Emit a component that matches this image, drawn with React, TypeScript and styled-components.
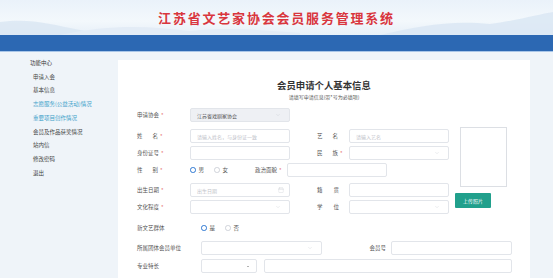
import React from "react";
import styled, { createGlobalStyle } from "styled-components";
import { ChevronDown, Calendar } from "lucide-react";

const GlobalStyle = createGlobalStyle`
  html, body {
    margin: 0;
    padding: 0;
    background: #eff4f9;
    font-family: "Noto Sans CJK SC", "Noto Sans", sans-serif;
  }
  #root {
    width: 553px;
    height: 278px;
    overflow: hidden;
  }
`;

const menu = [
  { text: "申请入会" },
  { text: "基本信息" },
  { text: "志愿服务(公益活动)情况", active: true },
  { text: "重要项目创作情况", active: true },
  { text: "会员及作品获奖情况" },
  { text: "站内信" },
  { text: "修改密码" },
  { text: "退出" },
];

function Mountains() {
  return (
    <svg width="553" height="35" viewBox="0 0 553 35" preserveAspectRatio="none">
      <path
        d="M0 22 C30 18 50 24 80 30 L110 35 L0 35 Z"
        fill="#d9e6f2"
        opacity="0.8"
      />
      <path
        d="M60 35 C110 24 150 26 190 31 C230 27 260 30 300 33 L300 35 Z"
        fill="#e3ecf6"
      />
      <path
        d="M380 35 C420 26 450 20 490 24 C520 20 540 14 553 12 L553 35 Z"
        fill="#dce8f4"
        opacity="0.9"
      />
    </svg>
  );
}

function Select({ value, width }: { value?: string; width: number }) {
  return (
    <SelectBox $w={width} $filled={!!value}>
      <span>{value}</span>
      <ChevronDown size={6} strokeWidth={1} color="#b8bcc4" />
    </SelectBox>
  );
}

function Radio({ label, checked }: { label: string; checked?: boolean }) {
  return (
    <RadioItem>
      <Dot $on={checked} />
      <span>{label}</span>
    </RadioItem>
  );
}

function Label({ text, req, w, spread }: { text: string; req?: boolean; w: number; spread?: number }) {
  return (
    <LabelBox $w={w}>
      {spread ? (
        <Spread $w={spread}>
          {text.split("").map((c, i) => (
            <span key={i}>{c}</span>
          ))}
        </Spread>
      ) : (
        text
      )}
      {req && <Star>*</Star>}
    </LabelBox>
  );
}

export default function App() {
  return (
    <>
      <GlobalStyle />
      <Header>
        <Mountains />
        <Title>江苏省文艺家协会会员服务管理系统</Title>
      </Header>
      <NavBar />
      <Main>
        <Sidebar>
          <SideHead>功能中心</SideHead>
          {menu.map((m) => (
            <SideItem key={m.text} $active={m.active}>
              {m.text}
            </SideItem>
          ))}
        </Sidebar>
        <Panel>
          <PanelTitle>会员申请个人基本信息</PanelTitle>
          <PanelSub>请填写申请信息(带*号为必填项)</PanelSub>

          <Row $mt={7}>
            <Label text="申请协会" req w={53} />
            <SelectBox $w={100} $grey>
              <span>江苏省戏剧家协会</span>
              <ChevronDown size={6} strokeWidth={1} color="#b8bcc4" />
            </SelectBox>
          </Row>

          <Upper>
            <Fields>
              <Row $mt={0}>
                <Label text="姓名" spread={21} req w={53} />
                <Input $w={100} placeholder="请输入姓名，与身份证一致" />
                <Gap />
                <Label text="艺名" spread={21} w={32} />
                <Input $w={100} placeholder="请输入艺名" />
              </Row>
              <Row>
                <Label text="身份证号" req w={53} />
                <Input $w={100} />
                <Gap />
                <Label text="民族" spread={21} req w={32} />
                <Select width={100} />
              </Row>
              <Row>
                <Label text="性别" spread={21} req w={53} />
                <Radios>
                  <Radio label="男" checked />
                  <Radio label="女" />
                </Radios>
                <Gap />
                <Label text="政治面貌" req w={32} />
                <Input $w={100} />
              </Row>
              <Row $mt={6}>
                <Label text="出生日期" req w={53} />
                <DateBox>
                  <span>出生日期</span>
                  <Calendar size={6} strokeWidth={1} color="#b8bcc4" />
                </DateBox>
                <Gap />
                <Label text="籍贯" spread={22} w={32} />
                <Input $w={100} />
              </Row>
              <Row>
                <Label text="文化程度" req w={53} />
                <Select width={100} />
                <Gap />
                <Label text="学位" spread={22} w={32} />
                <Select width={100} />
              </Row>
            </Fields>
            <PhotoCol>
              <Photo />
              <UploadButton>上传照片</UploadButton>
            </PhotoCol>
          </Upper>

          <Row $mt={7}>
            <Label text="新文艺群体" w={64} />
            <Radios>
              <Radio label="是" checked />
              <Radio label="否" />
            </Radios>
          </Row>
          <Row $mt={6}>
            <Label text="所属团体会员单位" w={64} />
            <Select width={121} />
            <RightLabel>会员号</RightLabel>
            <Input $w={121} />
          </Row>
          <Row $mt={4}>
            <Label text="专业特长" w={64} />
            <SmallSelect>
              <Caret />
            </SmallSelect>
            <Input $w={248} />
          </Row>
        </Panel>
      </Main>
    </>
  );
}

const Header = styled.div`
  position: relative;
  height: 35px;
  background: linear-gradient(180deg, #eaf2fa 0%, #f3f8fc 60%, #e7f0f8 100%);
  display: flex;
  justify-content: center;
  align-items: center;
  overflow: hidden;
  svg {
    position: absolute;
    left: 0;
    top: 0;
  }
`;

const Title = styled.h1`
  position: relative;
  margin: 0;
  font-size: 13px;
  font-weight: 700;
  letter-spacing: 1.8px;
  color: #d9363e;
  line-height: 1;
  margin-top: 0;
`;

const NavBar = styled.div`
  height: 16px;
  background: #2c68b3;
  border-bottom: 1px solid #a9c6e8;
`;

const Main = styled.div`
  display: flex;
  padding-top: 8px;
`;

const Sidebar = styled.div`
  width: 88px;
  padding-left: 30px;
  padding-top: 0;
  margin-top: -3px;
  font-size: 5.5px;
`;

const SideHead = styled.div`
  line-height: 13.7px;
  color: #333;
`;

const SideItem = styled.div<{ $active?: boolean }>`
  line-height: 13.7px;
  padding-left: 3px;
  color: ${(p) => (p.$active ? "#3b9fc9" : "#444")};
  white-space: nowrap;
`;

const Panel = styled.div`
  width: 393px;
  height: 240px;
  background: #fff;
  padding: 0 0 0 19px;
`;

const PanelTitle = styled.div`
  margin-top: 19px;
  text-align: center;
  font-size: 9.4px;
  line-height: 12px;
  font-weight: 700;
  color: #333;
  padding-right: 19px;
`;

const PanelSub = styled.div`
  margin-top: 2px;
  text-align: center;
  font-size: 5px;
  line-height: 8px;
  color: #555;
  padding-right: 19px;
`;

const Row = styled.div<{ $mt?: number }>`
  display: flex;
  align-items: center;
  height: 14px;
  margin-top: ${(p) => p.$mt ?? 3}px;
`;

const Upper = styled.div`
  display: flex;
  margin-top: 7px;
`;

const Fields = styled.div`
  display: flex;
  flex-direction: column;
`;

const Gap = styled.div`
  width: 27px;
`;

const LabelBox = styled.div<{ $w: number }>`
  width: ${(p) => p.$w}px;
  flex: none;
  display: flex;
  align-items: center;
  font-size: 5.5px;
  color: #555;
  white-space: nowrap;
`;

const Spread = styled.span<{ $w: number }>`
  display: inline-flex;
  justify-content: space-between;
  width: ${(p) => p.$w}px;
`;

const Star = styled.span`
  color: #e04848;
  margin-left: 2px;
`;

const Input = styled.input<{ $w: number }>`
  box-sizing: border-box;
  width: ${(p) => p.$w}px;
  height: 14px;
  border: 1px solid #e2e5ea;
  border-radius: 2px;
  padding: 0 6px;
  font-family: inherit;
  font-size: 5px;
  outline: none;
  background: #fff;
  &::placeholder {
    color: #bfc3ca;
  }
`;

const SelectBox = styled.div<{ $w: number; $grey?: boolean; $filled?: boolean }>`
  box-sizing: border-box;
  width: ${(p) => p.$w}px;
  height: 14px;
  border: 1px solid #e2e5ea;
  border-radius: 2px;
  padding: 0 8px 0 6px;
  display: flex;
  align-items: center;
  justify-content: space-between;
  font-size: 5px;
  color: #555;
  background: ${(p) => (p.$grey ? "#eef0f4" : "#fff")};
`;

const DateBox = styled(SelectBox).attrs({ $w: 100 })`
  padding-right: 5px;
  color: #bfc3ca;
`;

const SmallSelect = styled.div`
  box-sizing: border-box;
  width: 56px;
  height: 14px;
  border: 1px solid #e2e5ea;
  border-radius: 2px;
  display: flex;
  align-items: center;
  justify-content: flex-end;
  padding-right: 7px;
  margin-right: 7px;
`;

const Caret = styled.span`
  width: 0;
  height: 0;
  border-left: 1.2px solid transparent;
  border-right: 1.2px solid transparent;
  border-top: 1.6px solid #666;
`;

const Radios = styled.div`
  display: flex;
  align-items: center;
  gap: 10px;
`;

const RadioItem = styled.div`
  display: flex;
  align-items: center;
  gap: 3px;
  font-size: 5.5px;
  color: #555;
`;

const Dot = styled.span<{ $on?: boolean }>`
  box-sizing: border-box;
  width: 5.5px;
  height: 5.5px;
  border-radius: 50%;
  border: ${(p) => (p.$on ? "1.6px solid #2f78d3" : "0.8px solid #cfd3d9")};
  background: #fff;
`;

const RightLabel = styled.div`
  width: 64px;
  padding-right: 5px;
  text-align: right;
  font-size: 5.5px;
  color: #555;
`;

const PhotoCol = styled.div`
  display: flex;
  flex-direction: column;
  align-items: flex-start;
  margin-left: 6px;
  margin-top: -2px;
`;

const Photo = styled.div`
  box-sizing: border-box;
  width: 47px;
  height: 60px;
  margin-left: 5px;
  border: 1px solid #dcdfe4;
  background: #fff;
`;

const UploadButton = styled.button`
  margin-top: 6px;
  width: 36px;
  height: 15px;
  border: none;
  border-radius: 1px;
  background: #21a08c;
  color: #fff;
  font-family: inherit;
  font-size: 5px;
  padding: 0;
`;
